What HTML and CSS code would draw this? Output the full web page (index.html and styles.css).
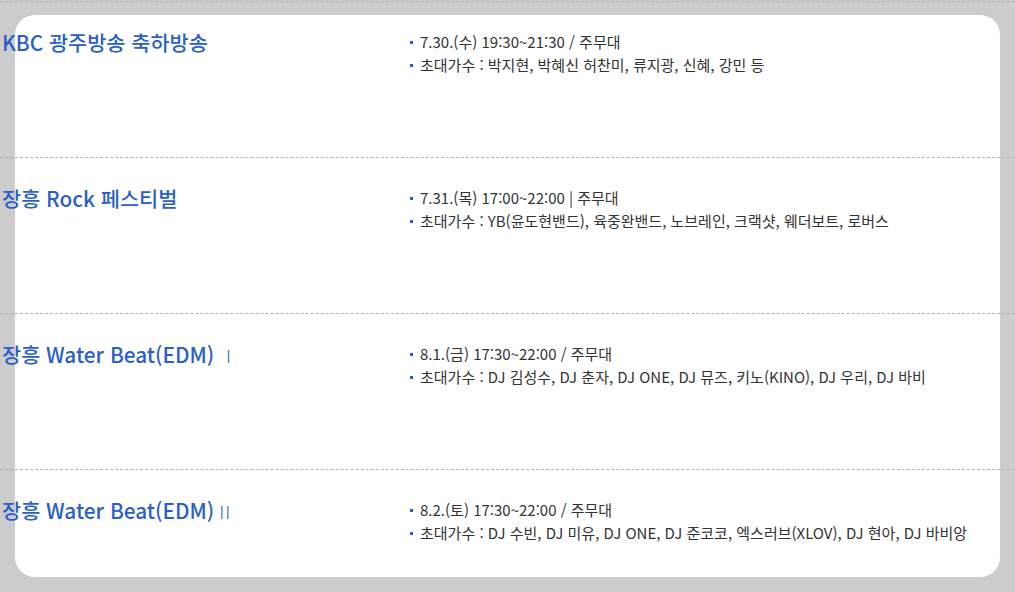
FILE: index.html
```html
<!DOCTYPE html>
<html lang="ko">
<head>
    <meta charset="UTF-8">
    <meta name="viewport" content="width=device-width, initial-scale=1.0">
    <title>축하공연 일정</title>
    <link rel="stylesheet" href="styles.css">
</head>
<body>
    <div class="card">
        <ul class="program-list">
            <li class="program">
                <h3 class="program-title">KBC 광주방송 축하방송</h3>
                <ul class="program-info">
                    <li>7.30.(수) 19:30~21:30 / 주무대</li>
                    <li>초대가수 : 박지현, 박혜신 허찬미, 류지광, 신혜, 강민 등</li>
                </ul>
            </li>
            <li class="program">
                <h3 class="program-title">장흥 Rock 페스티벌</h3>
                <ul class="program-info">
                    <li>7.31.(목) 17:00~22:00 | 주무대</li>
                    <li>초대가수 : YB(윤도현밴드), 육중완밴드, 노브레인, 크랙샷, 웨더보트, 로버스</li>
                </ul>
            </li>
            <li class="program">
                <h3 class="program-title">장흥 Water Beat(EDM) <span class="num">Ⅰ</span></h3>
                <ul class="program-info">
                    <li>8.1.(금) 17:30~22:00 / 주무대</li>
                    <li>초대가수 : DJ 김성수, DJ 춘자, DJ ONE, DJ 뮤즈, 키노(KINO), DJ 우리, DJ 바비</li>
                </ul>
            </li>
            <li class="program">
                <h3 class="program-title">장흥 Water Beat(EDM)<span class="num num-double">ⅠⅠ</span></h3>
                <ul class="program-info">
                    <li>8.2.(토) 17:30~22:00 / 주무대</li>
                    <li>초대가수 : DJ 수빈, DJ 미유, DJ ONE, DJ 준코코, 엑스러브(XLOV), DJ 현아, DJ 바비앙</li>
                </ul>
            </li>
        </ul>
    </div>
</body>
</html>
```

FILE: styles.css
```css
body {
    margin: 0;
    background-color: #cccccc;
    font-family: "Noto Sans CJK KR", "Noto Sans", sans-serif;
    color: #333;
}
.card {
    margin: 15px;
    height: 562px;
    background-color: #fff;
    border-radius: 20px;
}
.program-list {
    list-style: none;
    margin: 0 -15px;
    padding: 0;
    position: relative;
    top: -14px;
}
.program {
    display: flex;
    height: 155px;
    border-top: 1px dashed #b4b4b4;
}
.program:last-child {
    height: auto;
}
.program-title {
    width: 406px;
    margin: 0;
    padding: 26px 0 0 2px;
    font-size: 20.8px;
    line-height: 28px;
    font-weight: 500;
    color: #2a5fc9;
}
.program-title .num {
    font-size: 17px;
    font-weight: 300;
}
.program-title .num-double {
    margin-left: -1px;
    letter-spacing: -11px;
}
.program-info {
    list-style: none;
    margin: 0;
    padding: 28px 0 0 0;
}
.program-info li {
    position: relative;
    padding-left: 12px;
    font-size: 15px;
    line-height: 23px;
}
.program-info li::before {
    content: "";
    position: absolute;
    left: 2px;
    top: 11px;
    width: 3px;
    height: 3px;
    background-color: #2a5fc9;
}
```
